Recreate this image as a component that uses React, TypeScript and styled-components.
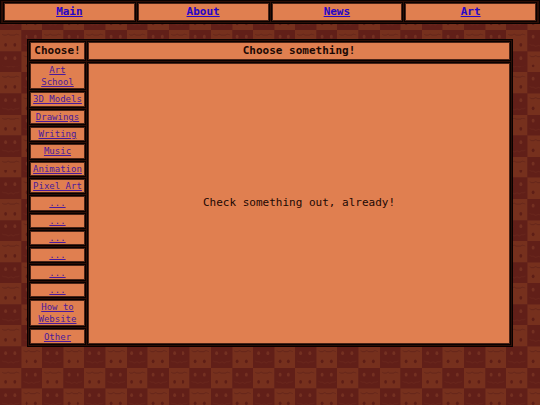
import React from "react";
import styled, { createGlobalStyle } from "styled-components";

const light = "#76301d";
const dark = "#611f18";

const lightFace = (x: number, y: number) => `
  <g transform="translate(${x} ${y})">
    <rect width="21" height="21" fill="${light}"/>
    <path d="M2 4L4 5L6 5L8 4L10 5L12 5L14 5L16 4L19 5" fill="none" stroke="#68271a" stroke-width="1"/>
    <ellipse cx="5.500" cy="14.500" rx="1.400" ry="1.800" fill="#5e1e16"/>
    <ellipse cx="14.500" cy="14.500" rx="1.400" ry="1.800" fill="#5e1e16"/>
  </g>`;

const darkFace = (x: number, y: number) => `
  <g transform="translate(${x} ${y})">
    <rect width="21" height="21" fill="${dark}"/>
    <ellipse cx="5.500" cy="6.500" rx="1.400" ry="1.800" fill="#743021"/>
    <ellipse cx="14.500" cy="6.500" rx="1.400" ry="1.800" fill="#743021"/>
    <path d="M2 14L4 15L6 15L8 16L11 15L13 16L15 15L17 15L19 14" fill="none" stroke="#68251b" stroke-width="1"/>
  </g>`;

const tile = encodeURIComponent(
  `<svg xmlns="http://www.w3.org/2000/svg" width="42" height="42" viewBox="0 0 42 42">${lightFace(0, 0)}${darkFace(21, 0)}${darkFace(0, 21)}${lightFace(21, 21)}</svg>`
);

const GlobalStyle = createGlobalStyle`
  * { box-sizing: border-box; }
  body {
    margin: 0;
    min-height: 100vh;
    background: ${dark} url("data:image/svg+xml,${tile}") 0 -12px / calc(100vw / 12.8) auto;
    font-family: "DejaVu Sans Mono", "Liberation Mono", monospace;
    color: #1c0803;
  }
`;

const frame = `
  background: #2c0e06;
  border: 1px solid #080100;
  padding: 1px;
`;

const cell = `
  background: #e07f50;
  border: 1px solid #080100;
  box-shadow: inset 0 0 0 1px #4a2417;
`;

const TopNav = styled.nav`
  ${frame}
  display: grid;
  grid-template-columns: repeat(4, 1fr);
  gap: 1px;
  padding: 1px 2px;
`;

const NavCell = styled.div`
  ${cell}
  padding: 1px;
  text-align: center;
  font-size: 11px;
  line-height: 16px;
  font-weight: bold;
`;

const Link = styled.a<{ $visited?: boolean }>`
  color: ${(p) => (p.$visited ? "#4a1a9b" : "#2606c8")};
  text-decoration: underline;
`;

const Panel = styled.main`
  ${frame}
  width: 90%;
  min-height: 76vh;
  margin: 15px auto 0;
  display: grid;
  grid-template-columns: 57px 1fr;
  grid-template-rows: auto 1fr;
  gap: 1px;
`;

const Heading = styled.h2`
  ${cell}
  margin: 0;
  text-align: center;
  white-space: nowrap;
  font-size: 11px;
  line-height: 18px;
  font-weight: bold;
`;

const Menu = styled.ul`
  margin: 0;
  padding: 0;
  list-style: none;
  display: flex;
  flex-direction: column;
  gap: 1px;
`;

const MenuItem = styled.li`
  ${cell}
  flex: 1 0 auto;
  display: flex;
  align-items: center;
  justify-content: center;
  padding: 1px;
  text-align: center;
  font-size: 9px;
  line-height: 12px;
`;

const Content = styled.section`
  ${cell}
  display: flex;
  align-items: center;
  justify-content: center;
  font-size: 11px;
  line-height: 16px;
`;

const Message = styled.p`
  margin: 0;
`;

const pages = ["Main", "About", "News", "Art"];

const sections = [
  "Art School", "3D Models", "Drawings", "Writing", "Music", "Animation", "Pixel Art",
  "...", "...", "...", "...", "...", "...", "How to Website", "Other",
];

export default function App() {
  return (
    <>
      <GlobalStyle />
      <TopNav>
        {pages.map((page) => (
          <NavCell key={page}><Link href="#">{page}</Link></NavCell>
        ))}
      </TopNav>
      <Panel>
        <Heading>Choose!</Heading>
        <Heading>Choose something!</Heading>
        <Menu>
          {sections.map((name, i) => (
            <MenuItem key={i}><Link href="#" $visited>{name}</Link></MenuItem>
          ))}
        </Menu>
        <Content><Message>Check something out, already!</Message></Content>
      </Panel>
    </>
  );
}
